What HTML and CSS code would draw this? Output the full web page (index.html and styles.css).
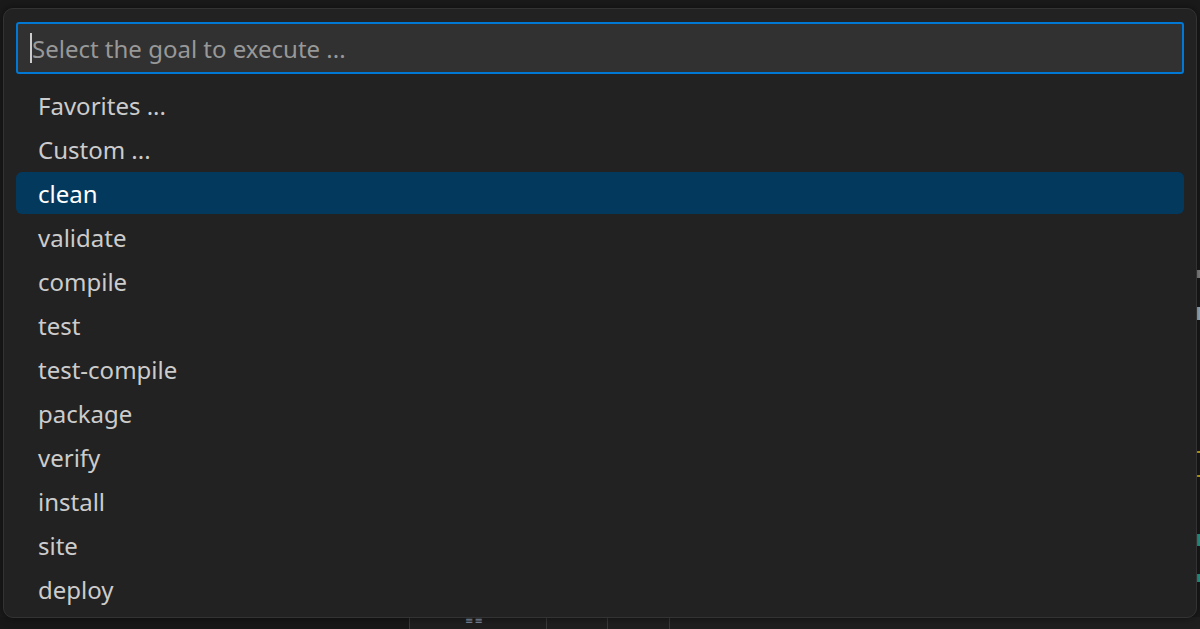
FILE: index.html
```html
<!DOCTYPE html>
<html lang="en">
<head>
<meta charset="utf-8">
<title>Select the goal to execute</title>
<link rel="stylesheet" href="styles.css">
</head>
<body>
<div class="backdrop">
  <div class="tabs">
    <span class="tab tab-a"></span>
    <span class="tab tab-b"><span class="mini">≡≡</span></span>
    <span class="tab tab-c"></span>
    <span class="tab tab-d"></span>
    <span class="tab tab-e"></span>
  </div>
  <span class="mark m1"></span>
  <span class="mark m2"></span>
  <span class="mark m3"></span>
  <span class="mark m4"></span>
  <span class="mark m5"></span>
  <span class="mark m6"></span>
</div>
<div class="quickpick">
  <div class="input">
    <span class="caret"></span><span class="placeholder">Select the goal to execute ...</span>
  </div>
  <ul class="list">
    <li class="row"><span class="label">Favorites ...</span></li>
    <li class="row"><span class="label">Custom ...</span></li>
    <li class="row selected"><span class="label">clean</span></li>
    <li class="row"><span class="label">validate</span></li>
    <li class="row"><span class="label">compile</span></li>
    <li class="row"><span class="label">test</span></li>
    <li class="row"><span class="label">test-compile</span></li>
    <li class="row"><span class="label">package</span></li>
    <li class="row"><span class="label">verify</span></li>
    <li class="row"><span class="label">install</span></li>
    <li class="row"><span class="label">site</span></li>
    <li class="row"><span class="label">deploy</span></li>
  </ul>
</div>
</body>
</html>
```

FILE: styles.css
```css
html, body {
  margin: 0;
  padding: 0;
  width: 1200px;
  height: 629px;
  overflow: hidden;
  background: #1a1a1a;
  font-family: "Noto Sans", "Open Sans", "DejaVu Sans", sans-serif;
}

body {
  position: relative;
}

.backdrop {
  position: absolute;
  inset: 0;
}

.tabs {
  position: absolute;
  left: 0;
  right: 0;
  bottom: 0;
  height: 12px;
  display: flex;
}

.tab {
  height: 100%;
  border-left: 1px solid #3a3a3a;
  background: #1f1f1f;
  position: relative;
}

.tab-a { width: 409px; border-left: none; background: #181818; }
.tab-b { width: 136px; }
.tab-c { width: 60px; }
.tab-d { width: 61px; }
.tab-e { flex: 1; }

.mini {
  position: absolute;
  left: 55px;
  top: -4px;
  font-size: 10px;
  color: #8a9bb0;
  letter-spacing: 1px;
}

.mark {
  position: absolute;
  right: 0;
  width: 3px;
}

.m1 { top: 270px; height: 8px; background: #8a8a8a; }
.m2 { top: 307px; height: 13px; background: #9fb6c9; }
.m3 { top: 451px; height: 2px; background: #c8a81e; }
.m4 { top: 475px; height: 2px; background: #c8a81e; }
.m5 { top: 534px; height: 12px; background: #2a9d8f; }
.m6 { top: 574px; height: 8px; background: #2a9d8f; }

.quickpick {
  position: absolute;
  left: 3px;
  top: 8px;
  width: 1194px;
  box-sizing: border-box;
  background: #222222;
  border: 1px solid #333333;
  border-radius: 10px;
  padding: 13px 12px 6px 12px;
  display: flex;
  flex-direction: column;
  box-shadow: 0 0 8px rgba(0, 0, 0, 0.5);
}

.input {
  flex: none;
  height: 52px;
  box-sizing: border-box;
  border: 2px solid #0078d4;
  border-radius: 3px;
  background: #313131;
  display: flex;
  align-items: center;
  padding-left: 12px;
}

.caret {
  width: 2px;
  height: 30px;
  background: #cccccc;
}

.placeholder {
  color: #989898;
  font-size: 24px;
}

.list {
  flex: none;
  list-style: none;
  margin: 9px 0 0 0;
  padding: 0;
  display: flex;
  flex-direction: column;
}

.row {
  flex: none;
  height: 44px;
  padding: 1px 0;
  box-sizing: border-box;
  display: flex;
}

.label {
  flex: 1;
  display: flex;
  align-items: center;
  padding-left: 22px;
  font-size: 24px;
  color: #cccccc;
  border-radius: 6px;
}

.selected .label {
  background: #04395e;
  color: #ffffff;
}
```
